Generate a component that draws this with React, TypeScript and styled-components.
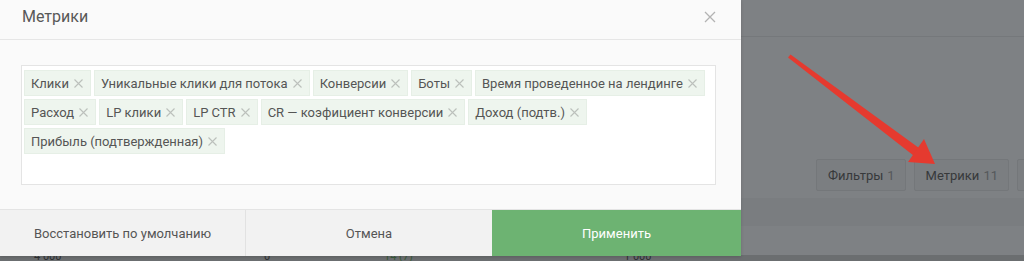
import React from "react";
import styled, { createGlobalStyle } from "styled-components";

const Global = createGlobalStyle`
  html, body { margin: 0; padding: 0; }
  body { font-family: Roboto, "Noto Sans", Arial, sans-serif; }
  * { box-sizing: border-box; }
`;

const Screen = styled.div`
  position: relative;
  width: 1024px;
  height: 261px;
  overflow: hidden;
  background: #7e8184;
`;

/* dimmed page behind the modal */
const Page = styled.div`
  display: flex;
  flex-direction: column;
  height: 100%;
`;

const PageHeader = styled.div`
  height: 37px;
  border-bottom: 1px solid #75787b;
  flex: none;
`;

const Toolbar = styled.div`
  display: flex;
  justify-content: flex-end;
  gap: 8px;
  padding: 122px 0 0 0;
  margin-right: -33px;
  height: 161px;
  flex: none;
`;

const PageButton = styled.div<{ $w?: number }>`
  height: 32px;
  ${(p) => (p.$w ? `width: ${p.$w}px;` : "")}
  padding: 0 10px 0 11px;
  display: flex;
  align-items: center;
  gap: 4px;
  border: 1px solid #74777a;
  border-radius: 2px;
  background: #7b7e81;
  color: #37393b;
  font-size: 13px;
`;

const Count = styled.span`
  color: #55585b;
`;

const Band = styled.div`
  height: 28px;
  background: #7a7d80;
  flex: none;
`;

const Gap = styled.div`
  height: 29px;
  flex: none;
`;

const BottomRow = styled.div`
  flex: 1;
  background: #6b6e70;
  display: flex;
  font-size: 11px;
  line-height: 12px;
  overflow: hidden;
`;

const Cell = styled.span<{ $w: number; $green?: boolean }>`
  width: ${(p) => p.$w}px;
  padding-left: 34px;
  margin-top: -4px;
  color: ${(p) => (p.$green ? "#3a5a3b" : "#2f3133")};
  flex: none;
`;

const Modal = styled.div`
  position: absolute;
  left: 0;
  top: 0;
  width: 741px;
  height: 256px;
  background: #fafafa;
  display: flex;
  flex-direction: column;
  box-shadow: 0 1px 3px rgba(0, 0, 0, 0.15);
`;

const Header = styled.div`
  height: 40px;
  flex: none;
  display: flex;
  align-items: center;
  justify-content: space-between;
  padding: 0 24px 0 22px;
  border-bottom: 1px solid #e6e6e6;
`;

const Title = styled.div`
  font-size: 16px;
  color: #585858;
  margin-top: -7px;
`;

const Close = styled.div`
  width: 14px;
  height: 14px;
  display: flex;
  margin-top: -5px;
`;

const Body = styled.div`
  flex: 1;
  padding: 25px 25px 0 21px;
`;

const TagBox = styled.div`
  background: #ffffff;
  border: 1px solid #e4e4e4;
  height: 120px;
  padding: 4px 2px 0 2px;
  display: flex;
  flex-wrap: wrap;
  align-content: flex-start;
  gap: 3px 3px;
`;

const Tag = styled.div`
  height: 26px;
  display: flex;
  align-items: center;
  gap: 5px;
  padding: 0 7px 0 6px;
  background: #eef5ee;
  border: 1px solid #e6efe6;
  font-size: 13px;
  color: #555555;
`;

const TagX = styled.svg`
  flex: none;
  margin-top: 1px;
`;

const Footer = styled.div`
  height: 47px;
  flex: none;
  display: grid;
  grid-template-columns: 245px 247px 1fr;
  border-top: 1px solid #e4e4e4;
`;

const FooterButton = styled.div<{ $primary?: boolean }>`
  display: flex;
  align-items: center;
  justify-content: center;
  font-size: 13px;
  background: ${(p) => (p.$primary ? "#6db372" : "#f2f2f2")};
  color: ${(p) => (p.$primary ? "#ffffff" : "#555555")};
  border-left: ${(p) => (p.$primary ? "none" : "1px solid #e2e2e2")};
  &:first-child {
    border-left: none;
  }
`;

const Arrow = styled.svg`
  position: absolute;
  left: 0;
  top: 0;
  pointer-events: none;
`;

const tags = [
  "Клики",
  "Уникальные клики для потока",
  "Конверсии",
  "Боты",
  "Время проведенное на лендинге",
  "Расход",
  "LP клики",
  "LP CTR",
  "CR — коэфициент конверсии",
  "Доход (подтв.)",
  "Прибыль (подтвержденная)",
];

export default function App() {
  return (
    <Screen>
      <Global />
      <Page>
        <PageHeader />
        <Toolbar>
          <PageButton>
            Фильтры <Count>1</Count>
          </PageButton>
          <PageButton>
            Метрики <Count>11</Count>
          </PageButton>
          <PageButton $w={40} />
        </Toolbar>
        <Band />
        <Gap />
        <BottomRow>
          <Cell $w={230}>4 000</Cell>
          <Cell $w={120}>0</Cell>
          <Cell $w={240} $green>
            14 (7)
          </Cell>
          <Cell $w={200}>1 000</Cell>
        </BottomRow>
      </Page>

      <Modal>
        <Header>
          <Title>Метрики</Title>
          <Close>
            <svg width="14" height="14" viewBox="0 0 14 14">
              <path d="M2 2 L12 12 M12 2 L2 12" stroke="#b3b3b3" strokeWidth="1.3" fill="none" />
            </svg>
          </Close>
        </Header>
        <Body>
          <TagBox>
            {tags.map((t) => (
              <Tag key={t}>
                {t}
                <TagX width="9" height="9" viewBox="0 0 9 9">
                  <path d="M0.5 0.5 L8.5 8.5 M8.5 0.5 L0.5 8.5" stroke="#bcc0bc" strokeWidth="1.1" fill="none" />
                </TagX>
              </Tag>
            ))}
          </TagBox>
        </Body>
        <Footer>
          <FooterButton>Восстановить по умолчанию</FooterButton>
          <FooterButton>Отмена</FooterButton>
          <FooterButton $primary>Применить</FooterButton>
        </Footer>
      </Modal>

      <Arrow width="1024" height="261" viewBox="0 0 1024 261">
        <path d="M788 57.5 L790.5 54.5 L919 148 L913.5 155.5 Z" fill="#e53a2f" />
        <path d="M935 164 L908 162 L924 139 Z" fill="#e53a2f" />
      </Arrow>
    </Screen>
  );
}
